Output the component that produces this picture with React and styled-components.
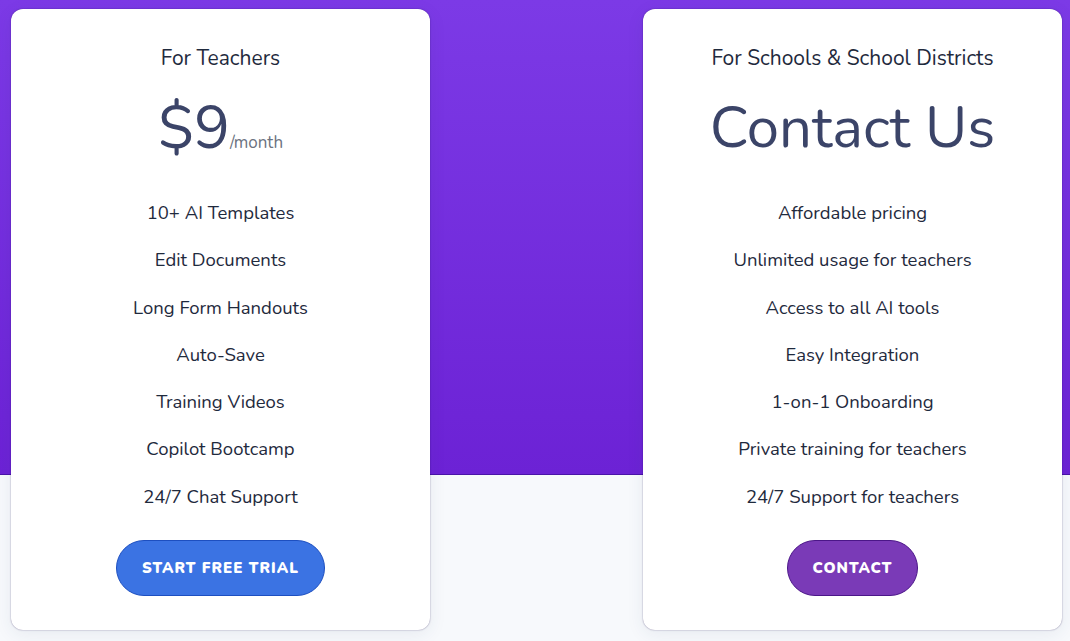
import styled, { createGlobalStyle } from "styled-components";

const GlobalStyle = createGlobalStyle`
  html, body {
    margin: 0;
    padding: 0;
  }
  body {
    font-family: "Nunito", "Open Sans", sans-serif;
    background: #f7f9fc;
  }
`;

const Page = styled.div`
  width: 1070px;
  height: 641px;
  overflow: hidden;
  background: linear-gradient(
    to bottom,
    #7c3ae6 0,
    #6c22d5 474px,
    #4a14a8 474px,
    #4a14a8 475px,
    #f7f9fc 475px
  );
`;

const Row = styled.div`
  display: flex;
  justify-content: space-between;
  padding: 9px 8px 0 11px;
`;

const Card = styled.div`
  width: 419px;
  height: 621px;
  box-sizing: border-box;
  background: #fff;
  border-radius: 12px;
  box-shadow: 0 0 1.5px rgba(20, 0, 70, 0.55),
    0 4px 18px rgba(40, 60, 100, 0.08);
  display: flex;
  flex-direction: column;
  align-items: center;
  padding-top: 35px;
  color: #1e293b;
`;

const Audience = styled.h3`
  margin: 0;
  font-size: 21px;
  font-weight: 400;
  line-height: 28px;
  color: #1f2a3d;
`;

const Price = styled.div`
  display: flex;
  align-items: baseline;
  margin-top: 20px;
  height: 72px;
  color: #3b4468;
  font-size: ${(p) => (p.$big ? "58px" : "60px")};
  line-height: 72px;
`;

const Period = styled.span`
  font-size: 17px;
  color: #6b7280;
`;

const Features = styled.ul`
  list-style: none;
  margin: 26px 0 0;
  padding: 0;
  text-align: center;
`;

const Feature = styled.li`
  font-size: 18.5px;
  line-height: 47.3px;
  color: #1f2a3d;
`;

const Button = styled.button`
  margin-top: 19px;
  height: 56px;
  padding: 0 25px;
  border-radius: 28px;
  border: 1px solid ${(p) => p.$border};
  background: ${(p) => p.$bg};
  color: #fff;
  font-family: inherit;
  font-size: 15px;
  font-weight: 900;
  letter-spacing: 1px;
  text-transform: uppercase;
  cursor: pointer;
`;

const plans = [
  {
    audience: "For Teachers",
    price: "$9",
    period: "/month",
    features: [
      "10+ AI Templates",
      "Edit Documents",
      "Long Form Handouts",
      "Auto-Save",
      "Training Videos",
      "Copilot Bootcamp",
      "24/7 Chat Support",
    ],
    cta: "Start Free Trial",
    bg: "#3b73e3",
    border: "#1d4fc0",
  },
  {
    audience: "For Schools & School Districts",
    price: "Contact Us",
    features: [
      "Affordable pricing",
      "Unlimited usage for teachers",
      "Access to all AI tools",
      "Easy Integration",
      "1-on-1 Onboarding",
      "Private training for teachers",
      "24/7 Support for teachers",
    ],
    cta: "Contact",
    bg: "#7a3ab7",
    border: "#4b1688",
  },
];

export default function App() {
  return (
    <>
      <GlobalStyle />
      <Page>
        <Row>
          {plans.map((plan) => (
            <Card key={plan.audience}>
              <Audience>{plan.audience}</Audience>
              <Price $big={!plan.period}>
                {plan.price}
                {plan.period && <Period>{plan.period}</Period>}
              </Price>
              <Features>
                {plan.features.map((f) => (
                  <Feature key={f}>{f}</Feature>
                ))}
              </Features>
              <Button $bg={plan.bg} $border={plan.border}>
                {plan.cta}
              </Button>
            </Card>
          ))}
        </Row>
      </Page>
    </>
  );
}
